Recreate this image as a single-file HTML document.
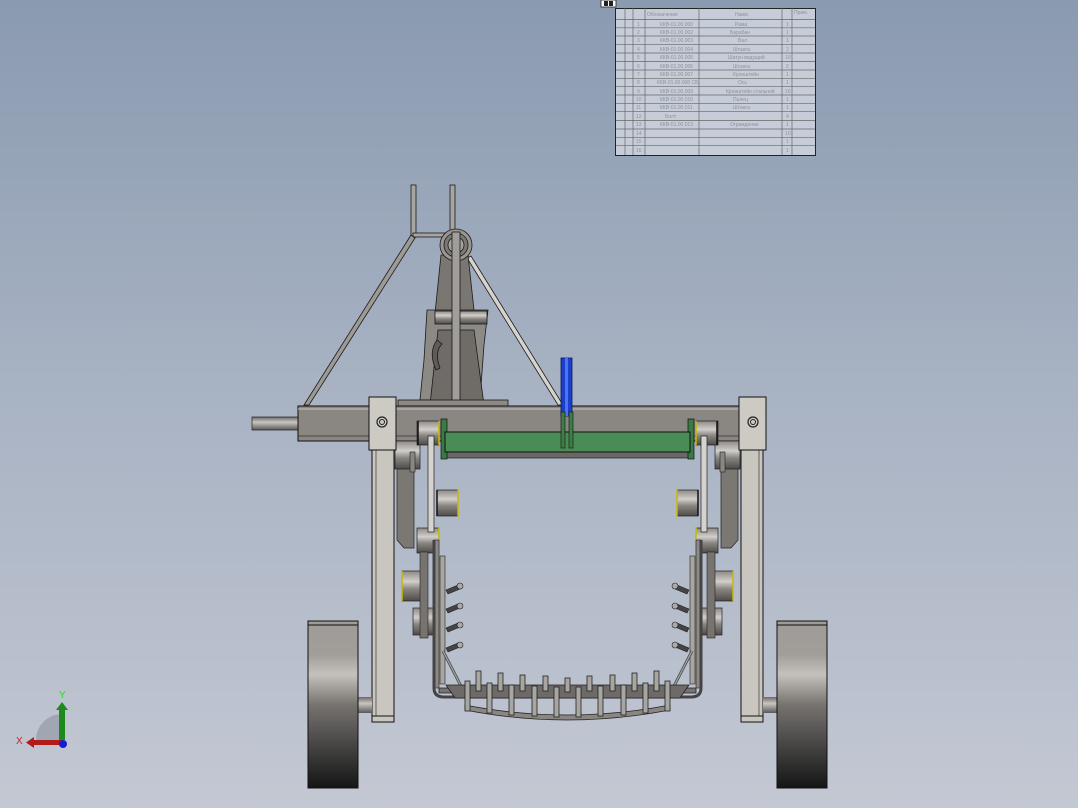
<!DOCTYPE html>
<html><head><meta charset="utf-8"><style>
html,body{margin:0;padding:0;width:1078px;height:808px;overflow:hidden}
body{background:linear-gradient(180deg,#8a9ab0 0%,#a6b1c2 45%,#c3c8d3 100%);font-family:"Liberation Sans",sans-serif}
svg{position:absolute;left:0;top:0}
</style></head><body>
<svg width="1078" height="808" viewBox="0 0 1078 808">
<defs>
<linearGradient id="cyl" x1="0" y1="0" x2="0" y2="1">
<stop offset="0" stop-color="#8d8a86"/><stop offset="0.35" stop-color="#d2cfca"/><stop offset="0.6" stop-color="#8a8783"/><stop offset="1" stop-color="#4d4b49"/></linearGradient>
<linearGradient id="wheel" x1="0" y1="0" x2="0" y2="1">
<stop offset="0" stop-color="#9f9c97"/><stop offset="0.2" stop-color="#a19e99"/><stop offset="0.32" stop-color="#c5c1bc"/><stop offset="0.5" stop-color="#77736f"/><stop offset="0.75" stop-color="#454443"/><stop offset="1" stop-color="#151515"/></linearGradient>
<linearGradient id="shaft" x1="0" y1="0" x2="0" y2="1">
<stop offset="0" stop-color="#6c6a67"/><stop offset="0.4" stop-color="#c9c6c1"/><stop offset="1" stop-color="#5a5856"/></linearGradient>
<g id="side">
<path d="M397,460 L414,460 L414,548 L404,548 L397,540 Z" fill="#7b7773" stroke="#222" stroke-width="0.7"/>
<rect x="395" y="441" width="25" height="28" fill="url(#cyl)" stroke="#222" stroke-width="0.7"/>
<rect x="417" y="421" width="22" height="24" fill="url(#cyl)" stroke="#222" stroke-width="0.7"/>
<line x1="439" y1="421" x2="439" y2="445" stroke="#c8b800" stroke-width="1.5"/>
<line x1="418" y1="421" x2="418" y2="445" stroke="#111" stroke-width="1.5"/>
<rect x="437" y="490" width="21" height="26" fill="url(#cyl)" stroke="#222" stroke-width="0.7"/>
<line x1="458" y1="489" x2="458" y2="517" stroke="#c8b800" stroke-width="1.5"/>
<line x1="437" y1="490" x2="437" y2="516" stroke="#111" stroke-width="1.5"/>
<rect x="417" y="528" width="22" height="25" fill="url(#cyl)" stroke="#222" stroke-width="0.7"/>
<line x1="439" y1="527" x2="439" y2="554" stroke="#c8b800" stroke-width="1.5"/>
<rect x="402" y="571" width="20" height="30" fill="url(#cyl)" stroke="#222" stroke-width="0.7"/>
<line x1="402" y1="571" x2="402" y2="601" stroke="#c8b800" stroke-width="1.5"/>
<rect x="413" y="608" width="22" height="27" fill="url(#cyl)" stroke="#222" stroke-width="0.7"/>
<line x1="434" y1="607" x2="434" y2="636" stroke="#c8b800" stroke-width="1.5"/>
<rect x="410" y="452" width="5" height="20" fill="#8a8682" stroke="#222" stroke-width="0.6"/>
<rect x="428" y="436" width="6" height="96" fill="#d6d3ce" stroke="#222" stroke-width="0.7"/>
<rect x="420" y="552" width="8" height="86" fill="#77736f" stroke="#222" stroke-width="0.6"/>
<rect x="434" y="540" width="5" height="148" fill="#8d8985" stroke="#222" stroke-width="0.6"/>
<rect x="440" y="556" width="5" height="128" fill="#a9a6a1" stroke="#222" stroke-width="0.6"/>
<g stroke="#222" stroke-width="0.6">
<path d="M446,590 L458,585 L460,589 L448,594 Z" fill="#444"/><circle cx="460" cy="586" r="3" fill="#aaa"/>
<path d="M446,609 L458,604 L460,608 L448,613 Z" fill="#444"/><circle cx="460" cy="606" r="3" fill="#aaa"/>
<path d="M446,628 L458,623 L460,627 L448,632 Z" fill="#444"/><circle cx="460" cy="625" r="3" fill="#aaa"/>
<path d="M446,648 L458,643 L460,647 L448,652 Z" fill="#444"/><circle cx="460" cy="645" r="3" fill="#aaa"/>
</g>
<line x1="443" y1="651" x2="463" y2="690" stroke="#555" stroke-width="3"/>
<line x1="443" y1="651" x2="463" y2="690" stroke="#aaa" stroke-width="1"/>
<rect x="372" y="446" width="22" height="276" fill="#c9c6c0" stroke="#111" stroke-width="1"/>
<line x1="376" y1="446" x2="376" y2="716" stroke="#222" stroke-width="0.6"/>
<line x1="372" y1="716" x2="394" y2="716" stroke="#111" stroke-width="1"/>
<rect x="369" y="397" width="27" height="53" fill="#cdcac4" stroke="#111" stroke-width="1"/>
<circle cx="382" cy="422" r="5" fill="none" stroke="#222" stroke-width="1.2"/><circle cx="382" cy="422" r="2.5" fill="none" stroke="#222"/>
<rect x="358" y="697" width="14" height="16" fill="url(#shaft)"/>
<rect x="308" y="621" width="50" height="167" fill="url(#wheel)" stroke="#111" stroke-width="1"/>
<line x1="308" y1="625" x2="358" y2="625" stroke="#111"/>
</g>
</defs>

<g font-family="Liberation Sans, sans-serif" font-size="5" fill="#8c919b">
<rect x="601" y="0" width="15" height="7" fill="#fff" stroke="#222" stroke-width="0.8"/>
<rect x="604" y="1" width="4" height="5" fill="#222"/><rect x="609" y="1" width="4" height="5" fill="#222"/>
<rect x="615.5" y="8.5" width="200" height="147" fill="#c7cdd8" stroke="#222" stroke-width="1"/>
<g stroke="#666" stroke-width="0.7">
<line x1="625" y1="8" x2="625" y2="155"/><line x1="633" y1="8" x2="633" y2="155"/><line x1="645" y1="8" x2="645" y2="155"/><line x1="699" y1="8" x2="699" y2="155"/><line x1="782" y1="8" x2="782" y2="155"/><line x1="792" y1="8" x2="792" y2="155"/>
<line x1="616" y1="19.5" x2="815" y2="19.5"/><line x1="616" y1="27.8" x2="815" y2="27.8"/><line x1="616" y1="36" x2="815" y2="36"/><line x1="616" y1="44.3" x2="815" y2="44.3"/><line x1="616" y1="53" x2="815" y2="53"/><line x1="616" y1="61.5" x2="815" y2="61.5"/><line x1="616" y1="70" x2="815" y2="70"/><line x1="616" y1="78.3" x2="815" y2="78.3"/><line x1="616" y1="86.7" x2="815" y2="86.7"/><line x1="616" y1="95" x2="815" y2="95"/><line x1="616" y1="103.3" x2="815" y2="103.3"/><line x1="616" y1="111.7" x2="815" y2="111.7"/><line x1="616" y1="120.5" x2="815" y2="120.5"/><line x1="616" y1="129" x2="815" y2="129"/><line x1="616" y1="137.3" x2="815" y2="137.3"/><line x1="616" y1="145.7" x2="815" y2="145.7"/>
</g>
<text x="647" y="16">Обозначение</text><text x="735" y="16">Наим.</text><text x="794" y="14">Прим.</text>
<text x="637" y="26">1</text><text x="660" y="26">ККВ-01.00.000</text><text x="735" y="26">Рама</text><text x="786" y="26">1</text>
<text x="637" y="34">2</text><text x="660" y="34">ККВ-01.00.002</text><text x="730" y="34">Барабан</text><text x="786" y="34">1</text>
<text x="637" y="42">3</text><text x="660" y="42">ККВ-01.00.003</text><text x="738" y="42">Вал</text><text x="786" y="42">1</text>
<text x="637" y="51">4</text><text x="660" y="51">ККВ-01.00.004</text><text x="733" y="51">Штанга</text><text x="786" y="51">2</text>
<text x="637" y="59">5</text><text x="660" y="59">ККВ-01.00.005</text><text x="728" y="59">Шатун ведущий</text><text x="785" y="59">10</text>
<text x="637" y="68">6</text><text x="660" y="68">ККВ-01.00.006</text><text x="733" y="68">Штанга</text><text x="786" y="68">2</text>
<text x="637" y="76">7</text><text x="660" y="76">ККВ-01.00.007</text><text x="733" y="76">Кронштейн</text><text x="786" y="76">1</text>
<text x="637" y="84">8</text><text x="657" y="84">ККВ-01.00.008 СБ</text><text x="738" y="84">Ось</text><text x="786" y="84">1</text>
<text x="637" y="93">9</text><text x="660" y="93">ККВ-01.00.009</text><text x="726" y="93">Кронштейн стальной</text><text x="785" y="93">16</text>
<text x="636" y="101">10</text><text x="660" y="101">ККВ-01.00.010</text><text x="733" y="101">Палец</text><text x="786" y="101">1</text>
<text x="636" y="109">11</text><text x="660" y="109">ККВ-01.00.011</text><text x="733" y="109">Штанга</text><text x="786" y="109">1</text>
<text x="636" y="118">12</text><text x="665" y="118">Болт</text><text x="786" y="118">4</text>
<text x="636" y="126">13</text><text x="660" y="126">ККВ-01.00.013</text><text x="730" y="126">Ограждение</text><text x="786" y="126">1</text>
<text x="636" y="135">14</text><text x="785" y="135">10</text>
<text x="636" y="143">15</text><text x="786" y="143">1</text>
<text x="636" y="152">16</text><text x="786" y="152">1</text>
</g>

<g stroke="#1a1a1a" stroke-width="0.8">
<rect x="411" y="185" width="5" height="52" fill="#a8a5a0"/>
<rect x="450" y="185" width="5" height="52" fill="#a8a5a0"/>
<rect x="413" y="233" width="40" height="4" fill="#a8a5a0"/>
<path d="M411,235 L415,238 L309,405 L304,405 Z" fill="#9d9a95"/>
<path d="M467,258 L471,256 L563,405 L558,405 Z" fill="#d6d3ce"/>
<path d="M441,255 L468,255 L474,310 L457,410 L425,410 Z" fill="#7a7672"/>
<path d="M427,310 L488,310 L484,345 L480,400 L420,400 L424,360 Z" fill="#8d8985"/>
<path d="M438,330 L474,330 L484,405 L430,405 Z" fill="#6f6b67"/>
<rect x="435" y="311" width="52" height="13" fill="url(#cyl)"/>
<circle cx="456" cy="245" r="16" fill="#9a9792"/><circle cx="456" cy="245" r="12" fill="#7c7874"/><circle cx="456" cy="245" r="8" fill="#a5a29d"/>
<rect x="452" y="232" width="8" height="176" fill="#a19e99"/>
<path d="M437,340 Q428,352 436,370 L440,368 Q434,352 442,344 Z" fill="#5e5b58"/>
<rect x="398" y="400" width="110" height="6" fill="#8d8985"/>
</g>

<rect x="252" y="417" width="46" height="13" fill="url(#shaft)" stroke="#222" stroke-width="0.7"/>
<rect x="298" y="406" width="441" height="35" fill="#8a8682" stroke="#111" stroke-width="1"/>
<line x1="298" y1="409" x2="739" y2="409" stroke="#c6c3be" stroke-width="1"/>
<line x1="298" y1="436" x2="739" y2="436" stroke="#333" stroke-width="0.8"/>

<rect x="561" y="358" width="11" height="58" fill="#1b3fc9" stroke="#0a1a60" stroke-width="0.8"/>
<rect x="565" y="358" width="3" height="58" fill="#4c74ef"/>

<rect x="445" y="452" width="245" height="6" fill="#6a6764" stroke="#222" stroke-width="0.7"/>
<rect x="441" y="419" width="6" height="40" fill="#3b7a42" stroke="#111" stroke-width="0.7"/>
<rect x="688" y="419" width="6" height="40" fill="#3b7a42" stroke="#111" stroke-width="0.7"/>
<rect x="445" y="432" width="245" height="20" fill="#4a8c55" stroke="#111" stroke-width="1"/>
<rect x="561" y="412" width="4" height="36" fill="#3e7d48" stroke="#111" stroke-width="0.6"/>
<rect x="569" y="412" width="4" height="36" fill="#3e7d48" stroke="#111" stroke-width="0.6"/>

<use href="#side"/>
<use href="#side" transform="translate(1135,0) scale(-1,1)"/>

<g stroke="#222" stroke-width="0.8">
<path d="M434,540 L434,688 Q434,697 444,697 L691,697 Q701,697 701,688 L701,540" fill="none" stroke="#444" stroke-width="3"/>
<path d="M439,688 L696,688 L696,693 L439,693 Z" fill="#77736f"/>
<path d="M446,685 L689,685 L680,698 L455,698 Z" fill="#6d6a67"/>
<path d="M465,705 Q567,725 670,705 L670,710 Q567,730 465,710 Z" fill="#8a8682"/>
<g fill="#a9a6a1">
<rect x="476" y="671" width="5" height="20"/><rect x="498" y="673" width="5" height="18"/><rect x="520" y="675" width="5" height="16"/><rect x="543" y="676" width="5" height="15"/><rect x="565" y="678" width="5" height="14"/><rect x="587" y="676" width="5" height="15"/><rect x="610" y="675" width="5" height="16"/><rect x="632" y="673" width="5" height="18"/><rect x="654" y="671" width="5" height="20"/>
<rect x="465" y="681" width="5" height="30"/><rect x="487" y="683" width="5" height="30"/><rect x="509" y="685" width="5" height="30"/><rect x="532" y="686" width="5" height="30"/><rect x="554" y="687" width="5" height="30"/><rect x="576" y="687" width="5" height="30"/><rect x="598" y="686" width="5" height="30"/><rect x="621" y="685" width="5" height="30"/><rect x="643" y="683" width="5" height="30"/><rect x="665" y="681" width="5" height="30"/>
</g>
</g>

<path d="M36,740 A26,26 0 0 1 62,714 L62,740 Z" fill="#9aa0aa" opacity="0.8"/>
<rect x="59" y="708" width="6" height="32" fill="#1e8a1e"/>
<path d="M56,710 L62,702 L68,710 Z" fill="#1e8a1e"/>
<rect x="32" y="740" width="30" height="5" fill="#b41a1a"/>
<path d="M34,737 L26,742.5 L34,748 Z" fill="#b41a1a"/>
<circle cx="63" cy="744" r="4" fill="#1a1ad0"/>
<text x="59" y="698" font-size="10" fill="#22dd22" font-family="Liberation Sans,sans-serif">Y</text>
<text x="16" y="744" font-size="10" fill="#e01818" font-family="Liberation Sans,sans-serif">X</text>
</svg>
</body></html>
